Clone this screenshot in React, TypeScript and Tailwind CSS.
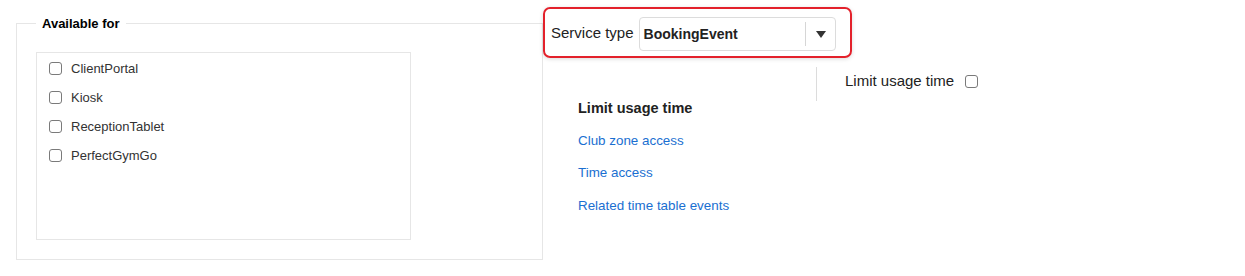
import React from "react";

const channels = ["ClientPortal", "Kiosk", "ReceptionTablet", "PerfectGymGo"];
const links = ["Club zone access", "Time access", "Related time table events"];

function Box() {
  return (
    <input
      type="checkbox"
      className="m-0 h-[13px] w-[13px] shrink-0 appearance-none rounded-[3px] border border-[#7a7a7a] bg-white"
    />
  );
}

export default function App() {
  return (
    <div
      className="flex h-[276px] w-[1245px] items-start bg-white text-[13px] text-[#222]"
      style={{ fontFamily: '"Liberation Sans", Arial, sans-serif' }}
    >
      <fieldset className="mt-[16px] ml-[16px] w-[527px] border border-[#e6e6e6] pr-0 pb-[19px] pl-[19px]">
        <legend className="px-[6px] text-[13px] leading-[15px] font-bold text-black">Available for</legend>
        <div className="mt-[21px] h-[188px] w-[375px] border border-[#e6e6e6] pt-[1px] pl-[12px]">
          {channels.map((c) => (
            <label key={c} className="flex h-[29px] items-center">
              <Box />
              <span className="ml-[9px] text-[#333]">{c}</span>
            </label>
          ))}
        </div>
      </fieldset>

      <div className="flex flex-col">
        <div className="mt-[7px] flex h-[51px] w-[309px] items-start rounded-[7px] border-2 border-[#e3212b] pt-[8px] pr-[14px] pl-[6px] shadow-[0_1px_4px_rgba(0,0,0,0.15)]">
          <span className="mt-[7px] text-[15px] leading-[18px] text-[#222]">Service type</span>
          <div className="ml-[5px] flex h-[34px] flex-1 items-center rounded-[4px] border border-[#dcdcdc] bg-white">
            <span className="flex-1 pl-[4px] text-[14px] font-bold text-[#222]">BookingEvent</span>
            <div className="h-[24px] w-px bg-[#d6d6d6]" />
            <div className="flex w-[29px] justify-center">
              <svg width="10" height="7" viewBox="0 0 10 7">
                <path d="M0 0 L10 0 L5 7 Z" fill="#333" />
              </svg>
            </div>
          </div>
        </div>

        <div className="mt-[9px] flex h-[34px]">
          <div className="w-[273px]" />
          <div className="w-px bg-[#dcdcdc]" />
          <div className="ml-[28px] flex items-center pb-[6px]">
            <span className="text-[15px] text-[#222]">Limit usage time</span>
            <span className="ml-[11px] flex">
              <Box />
            </span>
          </div>
        </div>

        <div className="-mt-[1px] flex flex-col gap-[16.5px] pl-[35px]">
          <div className="text-[14.5px] leading-[16px] font-bold text-[#222]">Limit usage time</div>
          {links.map((l) => (
            <a key={l} href="#" className="text-[13.4px] leading-[16px] text-[#1a6fd1]">
              {l}
            </a>
          ))}
        </div>
      </div>
    </div>
  );
}
